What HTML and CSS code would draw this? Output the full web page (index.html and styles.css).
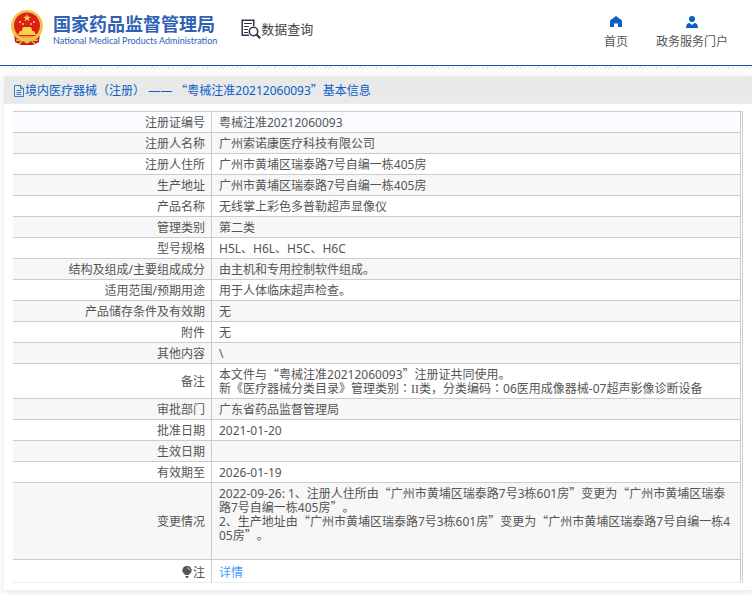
FILE: index.html
```html
<!DOCTYPE html>
<html lang="zh-CN">
<head>
    <meta charset="UTF-8">
    <title>数据查询 - 国家药品监督管理局</title>
    <link rel="stylesheet" href="styles.css">
</head>
<body>
    <!-- 页头 -->
    <header class="header">
        <div class="brand">
            <svg class="emblem" viewBox="0 0 34 36" aria-hidden="true">
                <path d="M4 23l1 9 6 3h12l6-3 1-9z" fill="#c81a16"/>
                <circle cx="17" cy="16" r="16" fill="#f0c34c"/>
                <circle cx="17" cy="15.500" r="13" fill="#dc2019"/>
                <path d="M17 4l1 2.700h2.900l-2.300 1.700.9 2.800-2.500-1.700-2.500 1.700.9-2.800-2.300-1.700H16z" fill="#f8d34a"/>
                <g fill="#f8d34a">
                    <circle cx="10" cy="12" r="1"/><circle cx="13" cy="14" r="1"/>
                    <circle cx="21" cy="14" r="1"/><circle cx="24" cy="12" r="1"/>
                    <path d="M12 19l1.500-2h7l1.500 2v2h2l2 4H8l2-4h2z"/>
                </g>
                <path d="M7 27h20" stroke="#f0c34c" stroke-width="1.500"/>
                <path d="M6 30q5 1 8-1 3-2 6 0t8 1M9 34l3-2.500M25 34l-3-2.500" fill="none" stroke="#f0c34c" stroke-width="1.500"/>
                <circle cx="17" cy="31" r="2.500" fill="#f0c34c"/>
            </svg>
            <div class="brand-text">
                <div class="brand-cn">国家药品监督管理局</div>
                <div class="brand-en">National Medical Products Administration</div>
            </div>
        </div>
        <div class="query">
            <svg class="query-icon" viewBox="0 0 20 20" fill="none" stroke="#33354c" aria-hidden="true">
                <path d="M8 16.300H1.200V1.200h11.600V7" stroke-width="1.500"/>
                <path d="M3 4.500h8M3 7.500h5M3 10.500h4M3 13.500h4" stroke-width="1"/>
                <circle cx="12.500" cy="12.500" r="4.200" stroke-width="1.600"/>
                <path d="M15.700 15.700l3.600 3.600" stroke-width="2.200"/>
            </svg>
            <span>数据查询</span>
        </div>
        <nav class="nav">
            <a class="nav-item" href="#">
                <svg viewBox="0 0 12 12" aria-hidden="true"><path d="M6 0l6 4.500V11H8V7.500H4V11H0V4.500z" fill="#0a5fc4"/></svg>
                <span>首页</span>
            </a>
            <a class="nav-item" href="#">
                <svg viewBox="0 0 12 12" aria-hidden="true"><circle cx="6" cy="3" r="3" fill="#0a5fc4"/><path d="M0 12c0-3.500 1.500-5 3.500-5L6 9l2.500-2C10.500 7 12 8.500 12 12z" fill="#0a5fc4"/></svg>
                <span>政务服务门户</span>
            </a>
        </nav>
    </header>
    <div class="stripe"></div>

    <!-- 基本信息 -->
    <main class="card">
        <h1 class="card-title">
            <svg viewBox="0 0 12 12" fill="none" stroke="#0a5fc4" stroke-width=".8" aria-hidden="true"><path d="M1.500 .5h6l3 3v8h-9zM7.500 .5v3h3M3.500 5.500h5M3.500 7.500h5M3.500 9.500h5"/></svg>
            <span>境内医疗器械<span class="mid" lang="zh-TW">（</span>注册<span class="mid" lang="zh-TW">）</span> —— <span class="zh">“</span>粤械注准20212060093<span class="zh">”</span>基本信息</span>
        </h1>
        <div class="table-wrap">
            <table class="info">
                <tbody>
                    <tr><th scope="row">注册证编号</th><td>粤械注准20212060093</td></tr>
                    <tr><th scope="row">注册人名称</th><td>广州索诺康医疗科技有限公司</td></tr>
                    <tr><th scope="row">注册人住所</th><td>广州市黄埔区瑞泰路7号自编一栋405房</td></tr>
                    <tr><th scope="row">生产地址</th><td>广州市黄埔区瑞泰路7号自编一栋405房</td></tr>
                    <tr><th scope="row">产品名称</th><td>无线掌上彩色多普勒超声显像仪</td></tr>
                    <tr><th scope="row">管理类别</th><td>第二类</td></tr>
                    <tr><th scope="row">型号规格</th><td>H5L、H6L、H5C、H6C</td></tr>
                    <tr><th scope="row">结构及组成/主要组成成分</th><td>由主机和专用控制软件组成。</td></tr>
                    <tr><th scope="row">适用范围/预期用途</th><td>用于人体临床超声检查。</td></tr>
                    <tr><th scope="row">产品储存条件及有效期</th><td>无</td></tr>
                    <tr><th scope="row">附件</th><td>无</td></tr>
                    <tr><th scope="row">其他内容</th><td>\</td></tr>
                    <tr><th scope="row">备注</th><td>本文件与<span class="zh">“</span>粤械注准20212060093<span class="zh">”</span>注册证共同使用。<br>新《医疗器械分类目录》管理类别<span class="mid" lang="zh-TW">：</span><span class="roman">II</span>类，分类编码<span class="mid" lang="zh-TW">：</span>06医用成像器械-07超声影像诊断设备</td></tr>
                    <tr><th scope="row">审批部门</th><td>广东省药品监督管理局</td></tr>
                    <tr><th scope="row">批准日期</th><td>2021-01-20</td></tr>
                    <tr><th scope="row">生效日期</th><td></td></tr>
                    <tr><th scope="row">有效期至</th><td>2026-01-19</td></tr>
                    <tr><th scope="row">变更情况</th><td>2022-09-26: 1、注册人住所由<span class="zh">“</span>广州市黄埔区瑞泰路7号3栋601房<span class="zh">”</span>变更为<span class="zh">“</span>广州市黄埔区瑞泰路7号自编一栋405房<span class="zh">”</span>。<br>2、生产地址由<span class="zh">“</span>广州市黄埔区瑞泰路7号3栋601房<span class="zh">”</span>变更为<span class="zh">“</span>广州市黄埔区瑞泰路7号自编一栋405房<span class="zh">”</span>。<br><br></td></tr>
                    <tr class="note">
                        <th scope="row"><svg class="bulb" viewBox="0 0 10 12" aria-hidden="true"><path d="M5 0a4.300 4.300 0 0 1 2.500 8L7 9H3l-.5-1A4.300 4.300 0 0 1 5 0zM3.500 10h3v1l-1 1h-1l-1-1z" fill="#555"/><path d="M5.500 1.800Q7.300 2 7.500 4" fill="none" stroke="#fff" stroke-width=".8"/></svg>注</th>
                        <td><a href="#">详情</a></td>
                    </tr>
                </tbody>
            </table>
        </div>
    </main>
</body>
</html>
```

FILE: styles.css
```css
* {
    box-sizing: border-box;
}
body {
    margin: 0;
    background-color: #fff;
    color: #555;
    font-family: "Noto Sans", "Noto Sans CJK SC", sans-serif;
    font-size: 12px;
    line-height: 14px;
    text-spacing-trim: space-all;
    overflow-x: hidden;
}
a {
    text-decoration: none;
}
/* 全角标点 */
.zh {
    font-family: "Noto Sans CJK SC", sans-serif;
    line-height: 0;
}
/* 居中标点 */
.mid {
    font-family: "Noto Sans CJK TC", sans-serif;
    line-height: 0;
}
.roman {
    font-family: "Liberation Serif", serif;
    line-height: 0;
}

/* 页头 */
.header {
    display: flex;
    align-items: flex-start;
    height: 66px;
    padding: 0 24px 0 10px;
    border-bottom: 1px solid #0a56a8;
}
.brand {
    display: flex;
    gap: 9px;
    padding-top: 10px;
}
.emblem {
    width: 34px;
    height: 36px;
}
.brand-text {
    padding-top: 4px;
    color: #2f61b4;
    white-space: nowrap;
}
.brand-cn {
    font-size: 18px;
    line-height: 20px;
    font-weight: 700;
}
.brand-en {
    font-family: Lato, sans-serif;
    font-size: 9px;
    font-weight: 400;
    line-height: 14px;
}
.query {
    display: flex;
    align-items: center;
    padding-top: 18px;
    margin-left: 24px;
    color: #444;
    font-size: 13px;
    line-height: 22px;
}
.query-icon {
    width: 20px;
    height: 20px;
}
.nav {
    display: flex;
    gap: 28px;
    margin-left: auto;
    padding-top: 16px;
}
.nav-item {
    display: flex;
    flex-direction: column;
    align-items: center;
    gap: 7px;
    color: #555;
}
.nav-item svg {
    width: 12px;
    height: 12px;
}
.stripe {
    height: 3px;
    background: repeating-linear-gradient(135deg, #e6e6e6 0, #e6e6e6 1px, #fff 1px, #fff 3px);
}

/* 信息卡片 */
.card {
    margin: 7px 0 5px 4px;
    padding-bottom: 7px;
    border-bottom: 1px solid #ebeef5;
    box-shadow: 0 2px 12px rgba(0, 0, 0, 0.1);
}
.card-title {
    display: flex;
    align-items: center;
    height: 28px;
    margin: 0;
    padding: 2px 9px 0;
    background-color: #e9e9e9;
    border-bottom: 1px solid #ebeef5;
    color: #0a5fc4;
    font-size: 12px;
    font-weight: 400;
}
.card-title svg {
    width: 12px;
    height: 12px;
}
.table-wrap {
    margin: 7px 9px 0;
    padding-right: 1px;
    border-top: 1px solid #ccc;
    border-right: 1px solid #ccc;
}
.info {
    width: 100%;
    border-spacing: 0;
    table-layout: fixed;
}
.info th,
.info td {
    padding: 4px 7px 2px;
    height: 21px;
    border-right: 1px solid #ccc;
    border-bottom: 1px solid #ccc;
    font-weight: 400;
    text-align: left;
    word-break: break-all;
}
.info th {
    width: 199px;
    padding-right: 6px;
    text-align: right;
}
.info tr:nth-child(even) {
    background-color: #f7f7f7;
}
.info tr:first-child {
    background-color: #fafcff;
}
.info .note th,
.info .note td {
    height: 23px;
    padding-top: 6px;
    border-bottom-color: #ebeef5;
}
.note a {
    color: #409eff;
}
.bulb {
    width: 10px;
    height: 12px;
    margin-right: 1px;
    vertical-align: -1px;
}
```
